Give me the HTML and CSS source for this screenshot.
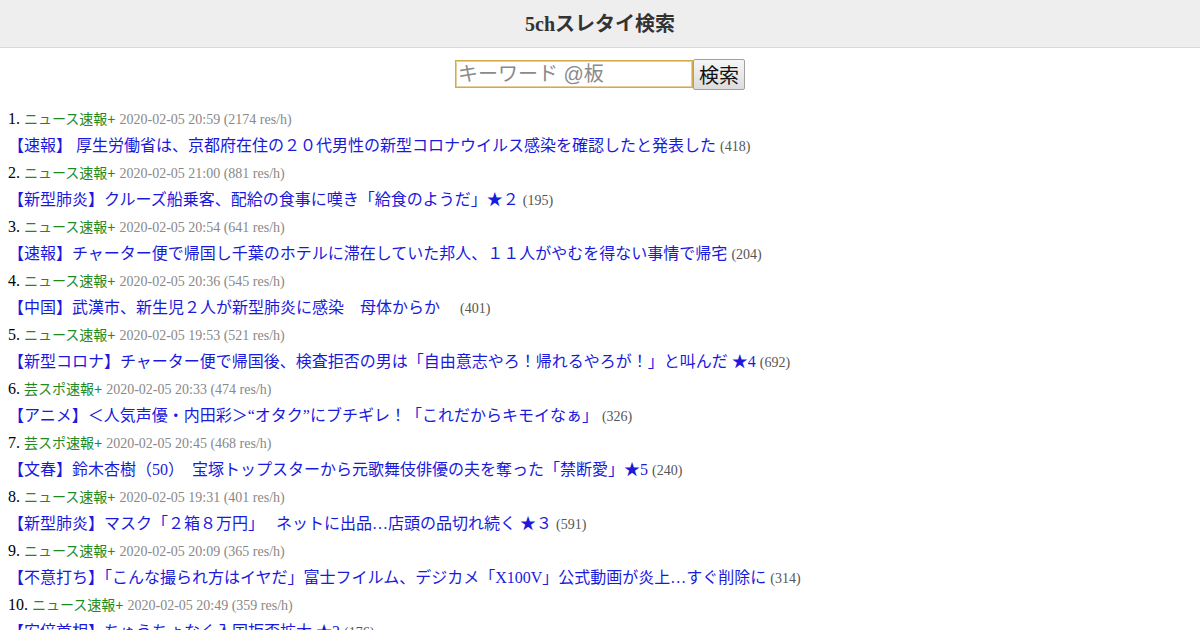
FILE: index.html
```html
<!DOCTYPE html>
<html lang="ja">
<head>
<meta charset="utf-8">
<title>5chスレタイ検索</title>
<link rel="stylesheet" href="styles.css">
</head>
<body>
<header class="site-header">
  <h1 class="site-title">5chスレタイ検索</h1>
</header>
<form class="search-form">
  <input class="search-input" type="text" placeholder="キーワード @板"><button class="search-button" type="button">検索</button>
</form>
<ol class="thread-list">
  <li class="thread">
    <div class="meta"><span class="num">1.</span> <span class="board">ニュース速報+</span> <span class="date">2020-02-05 20:59 (2174 res/h)</span></div>
    <div class="title-line"><a class="title" href="#">【速報】 厚生労働省は、京都府在住の２０代男性の新型コロナウイルス感染を確認したと発表した</a> <span class="count">(418)</span></div>
  </li>
  <li class="thread">
    <div class="meta"><span class="num">2.</span> <span class="board">ニュース速報+</span> <span class="date">2020-02-05 21:00 (881 res/h)</span></div>
    <div class="title-line"><a class="title" href="#">【新型肺炎】クルーズ船乗客、配給の食事に嘆き「給食のようだ」★２</a> <span class="count">(195)</span></div>
  </li>
  <li class="thread">
    <div class="meta"><span class="num">3.</span> <span class="board">ニュース速報+</span> <span class="date">2020-02-05 20:54 (641 res/h)</span></div>
    <div class="title-line"><a class="title" href="#">【速報】チャーター便で帰国し千葉のホテルに滞在していた邦人、１１人がやむを得ない事情で帰宅</a> <span class="count">(204)</span></div>
  </li>
  <li class="thread">
    <div class="meta"><span class="num">4.</span> <span class="board">ニュース速報+</span> <span class="date">2020-02-05 20:36 (545 res/h)</span></div>
    <div class="title-line"><a class="title" href="#">【中国】武漢市、新生児２人が新型肺炎に感染　母体からか　</a> <span class="count">(401)</span></div>
  </li>
  <li class="thread">
    <div class="meta"><span class="num">5.</span> <span class="board">ニュース速報+</span> <span class="date">2020-02-05 19:53 (521 res/h)</span></div>
    <div class="title-line"><a class="title" href="#">【新型コロナ】チャーター便で帰国後、検査拒否の男は「自由意志やろ！帰れるやろが！」と叫んだ ★4</a> <span class="count">(692)</span></div>
  </li>
  <li class="thread">
    <div class="meta"><span class="num">6.</span> <span class="board">芸スポ速報+</span> <span class="date">2020-02-05 20:33 (474 res/h)</span></div>
    <div class="title-line"><a class="title" href="#">【アニメ】＜人気声優・内田彩＞“オタク”にブチギレ！「これだからキモイなぁ」</a> <span class="count">(326)</span></div>
  </li>
  <li class="thread">
    <div class="meta"><span class="num">7.</span> <span class="board">芸スポ速報+</span> <span class="date">2020-02-05 20:45 (468 res/h)</span></div>
    <div class="title-line"><a class="title" href="#">【文春】鈴木杏樹（50）　宝塚トップスターから元歌舞伎俳優の夫を奪った「禁断愛」★5</a> <span class="count">(240)</span></div>
  </li>
  <li class="thread">
    <div class="meta"><span class="num">8.</span> <span class="board">ニュース速報+</span> <span class="date">2020-02-05 19:31 (401 res/h)</span></div>
    <div class="title-line"><a class="title" href="#">【新型肺炎】マスク「２箱８万円」　 ネットに出品…店頭の品切れ続く ★３</a> <span class="count">(591)</span></div>
  </li>
  <li class="thread">
    <div class="meta"><span class="num">9.</span> <span class="board">ニュース速報+</span> <span class="date">2020-02-05 20:09 (365 res/h)</span></div>
    <div class="title-line"><a class="title" href="#">【不意打ち】「こんな撮られ方はイヤだ」富士フイルム、デジカメ「X100V」公式動画が炎上…すぐ削除に</a> <span class="count">(314)</span></div>
  </li>
  <li class="thread">
    <div class="meta"><span class="num">10.</span> <span class="board">ニュース速報+</span> <span class="date">2020-02-05 20:49 (359 res/h)</span></div>
    <div class="title-line"><a class="title" href="#">【安倍首相】ちゅうちょなく入国拒否拡大 ★2</a> <span class="count">(176)</span></div>
  </li>
</ol>
</body>
</html>
```

FILE: styles.css
```css
html, body {
  margin: 0;
  padding: 0;
  background: #fff;
}

body {
  font-family: "Liberation Serif", "Noto Sans CJK JP", serif;
  font-size: 16px;
  color: #000;
}

.site-header {
  background: #eeeeee;
  border-bottom: 1px solid #d8d8d8;
  height: 47px;
  display: flex;
  align-items: center;
  justify-content: center;
}

.site-title {
  margin: 0;
  font-size: 20px;
  font-weight: bold;
  color: #333;
  line-height: 1;
}

.search-form {
  display: flex;
  justify-content: center;
  align-items: center;
  margin-top: 10px;
  height: 32px;
}

.search-input {
  box-sizing: border-box;
  width: 238px;
  height: 28px;
  border: 1px solid #d2a94f;
  outline: 1px solid #e8cf98;
  outline-offset: -2px;
  padding: 0 2px;
  font-family: "Liberation Sans", "Noto Sans CJK JP", sans-serif;
  font-size: 20px;
  color: #000;
  background: #fff;
}

.search-input::placeholder {
  color: #8a8a8a;
}

.search-button {
  box-sizing: border-box;
  height: 31px;
  padding: 0 5px;
  border: 1px solid #a0a0a0;
  border-radius: 2px;
  background: linear-gradient(#f6f6f6, #dcdcdc);
  font-family: "Liberation Sans", "Noto Sans CJK JP", sans-serif;
  font-size: 20px;
  color: #111;
}

.thread-list {
  list-style: none;
  margin: 15px 0 0;
  padding: 0 8px;
}

.meta, .title-line {
  line-height: 27px;
  height: 27px;
  white-space: nowrap;
}

.num {
  font-size: 16px;
  color: #000;
}

.board {
  font-family: "Liberation Sans", "Noto Sans CJK JP", sans-serif;
  font-size: 14px;
  color: #1f8a1f;
}

.date {
  font-size: 14px;
  color: #888;
}

.title {
  font-family: "Liberation Serif", "Noto Sans CJK JP", serif;
  font-size: 16px;
  color: #1a1add;
  text-decoration: none;
}

.count {
  font-size: 14px;
  color: #555;
}
```
